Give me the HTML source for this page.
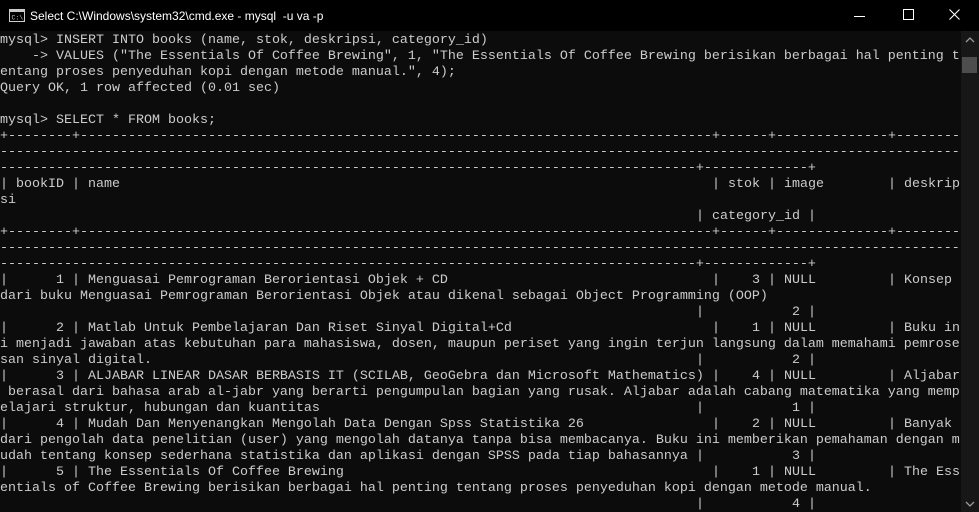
<!DOCTYPE html>
<html><head><meta charset="utf-8"><style>
body{margin:0;background:#0c0c0c;width:979px;height:512px;overflow:hidden;position:relative}
#tb{position:absolute;left:0;top:0;width:979px;height:31px;background:#000;color:#fff;font-family:"Liberation Sans",sans-serif;font-size:12px}
#tb .t{position:absolute;left:30px;top:9px;white-space:pre}
#con{position:absolute;left:0;top:31px;width:960px;height:481px;overflow:hidden;background:#0c0c0c;color:#cccccc;font-family:"Liberation Mono",monospace;font-size:13.333px;line-height:16px}
#in{position:absolute;left:0;top:2px;width:960px;height:480px}
.l{position:absolute;left:0;height:16px;white-space:pre;width:960px}
.l span{position:absolute;top:0}
#sb{position:absolute;left:961px;top:31px;width:18px;height:481px;background:#171717}
#th{position:absolute;left:962px;top:57px;width:15px;height:16px;background:#4d4d4d}
</style></head><body>
<div id="tb">
<svg style="position:absolute;left:9px;top:9px" width="16" height="13" viewBox="0 0 16 13"><rect x="0.5" y="0.5" width="15" height="12" fill="#000" stroke="#ccc"/><rect x="1" y="1" width="14" height="2" fill="#ccc"/><text x="2.5" y="10.5" font-size="6.5" fill="#ccc" font-family="Liberation Mono">C:\_</text></svg>
<span class="t">Select C:\Windows\system32\cmd.exe - mysql  -u va -p</span>
<svg style="position:absolute;left:854px;top:10px" width="12" height="12"><line x1="0" y1="6.5" x2="11" y2="6.5" stroke="#fff" stroke-width="1"/></svg>
<svg style="position:absolute;left:903px;top:9px" width="12" height="12"><rect x="0.5" y="0.5" width="10" height="10" fill="none" stroke="#fff"/></svg>
<svg style="position:absolute;left:949px;top:9px" width="12" height="12"><path d="M0.5 0.5L10.5 10.5M10.5 0.5L0.5 10.5" stroke="#fff" stroke-width="1.1"/></svg>
</div>
<div id="con"><div id="in">
<div class="l" style="top:0px">mysql&gt; INSERT INTO books (name, stok, deskripsi, category_id)</div>
<div class="l" style="top:16px">    -&gt; VALUES ("The Essentials Of Coffee Brewing", 1, "The Essentials Of Coffee Brewing berisikan berbagai hal penting t</div>
<div class="l" style="top:32px">entang proses penyeduhan kopi dengan metode manual.", 4);</div>
<div class="l" style="top:48px">Query OK, 1 row affected (0.01 sec)</div>
<div class="l" style="top:80px">mysql&gt; SELECT * FROM books;</div>

<div class="l" style="top:96px"><span style="left:0">+--------+</span><span style="left:80px">-------------------------------------------------------------------------------</span><span style="left:712px">+------+--------------+--------</span></div>
<div class="l" style="top:112px">------------------------------------------------------------------------------------------------------------------------</div>
<div class="l" style="top:128px">---------------------------------------------------------------------------------------+-------------+</div>
<div class="l" style="top:144px"><span style="left:0">| bookID | name</span><span style="left:712px">| stok | image        | deskrip</span></div>
<div class="l" style="top:160px">si</div>
<div class="l" style="top:176px"><span style="left:696px">| category_id |</span></div>
<div class="l" style="top:192px"><span style="left:0">+--------+</span><span style="left:80px">-------------------------------------------------------------------------------</span><span style="left:712px">+------+--------------+--------</span></div>
<div class="l" style="top:208px">------------------------------------------------------------------------------------------------------------------------</div>
<div class="l" style="top:224px">---------------------------------------------------------------------------------------+-------------+</div>

<div class="l" style="top:240px"><span style="left:0">|      1 | Menguasai Pemrograman Berorientasi Objek + CD</span><span style="left:712px">|    3 | NULL         | Konsep</span></div>
<div class="l" style="top:256px">dari buku Menguasai Pemrograman Berorientasi Objek atau dikenal sebagai Object Programming (OOP)</div>
<div class="l" style="top:272px"><span style="left:696px">|           2 |</span></div>
<div class="l" style="top:288px"><span style="left:0">|      2 | Matlab Untuk Pembelajaran Dan Riset Sinyal Digital+Cd</span><span style="left:712px">|    1 | NULL         | Buku in</span></div>
<div class="l" style="top:304px">i menjadi jawaban atas kebutuhan para mahasiswa, dosen, maupun periset yang ingin terjun langsung dalam memahami pemrose</div>
<div class="l" style="top:320px"><span style="left:0">san sinyal digital.</span><span style="left:696px">|           2 |</span></div>
<div class="l" style="top:336px"><span style="left:0">|      3 | ALJABAR LINEAR DASAR BERBASIS IT (SCILAB, GeoGebra dan Microsoft Mathematics)</span><span style="left:712px">|    4 | NULL         | Aljabar</span></div>
<div class="l" style="top:352px"> berasal dari bahasa arab al-jabr yang berarti pengumpulan bagian yang rusak. Aljabar adalah cabang matematika yang memp</div>
<div class="l" style="top:368px"><span style="left:0">elajari struktur, hubungan dan kuantitas</span><span style="left:696px">|           1 |</span></div>
<div class="l" style="top:384px"><span style="left:0">|      4 | Mudah Dan Menyenangkan Mengolah Data Dengan Spss Statistika 26</span><span style="left:712px">|    2 | NULL         | Banyak</span></div>
<div class="l" style="top:400px">dari pengolah data penelitian (user) yang mengolah datanya tanpa bisa membacanya. Buku ini memberikan pemahaman dengan m</div>
<div class="l" style="top:416px"><span style="left:0">udah tentang konsep sederhana statistika dan aplikasi dengan SPSS pada tiap bahasannya</span><span style="left:696px">|           3 |</span></div>
<div class="l" style="top:432px"><span style="left:0">|      5 | The Essentials Of Coffee Brewing</span><span style="left:712px">|    1 | NULL         | The Ess</span></div>
<div class="l" style="top:448px">entials of Coffee Brewing berisikan berbagai hal penting tentang proses penyeduhan kopi dengan metode manual.</div>
<div class="l" style="top:464px"><span style="left:696px">|           4 |</span></div>
</div></div>
<div id="sb"></div>
<div id="th"></div>
<svg style="position:absolute;left:965px;top:36px" width="10" height="8"><path d="M1 6L5 2L9 6" stroke="#9a9a9a" stroke-width="1.3" fill="none"/></svg>
<svg style="position:absolute;left:965px;top:500px" width="10" height="8"><path d="M1 2L5 6L9 2" stroke="#9a9a9a" stroke-width="1.3" fill="none"/></svg>
</body></html>
